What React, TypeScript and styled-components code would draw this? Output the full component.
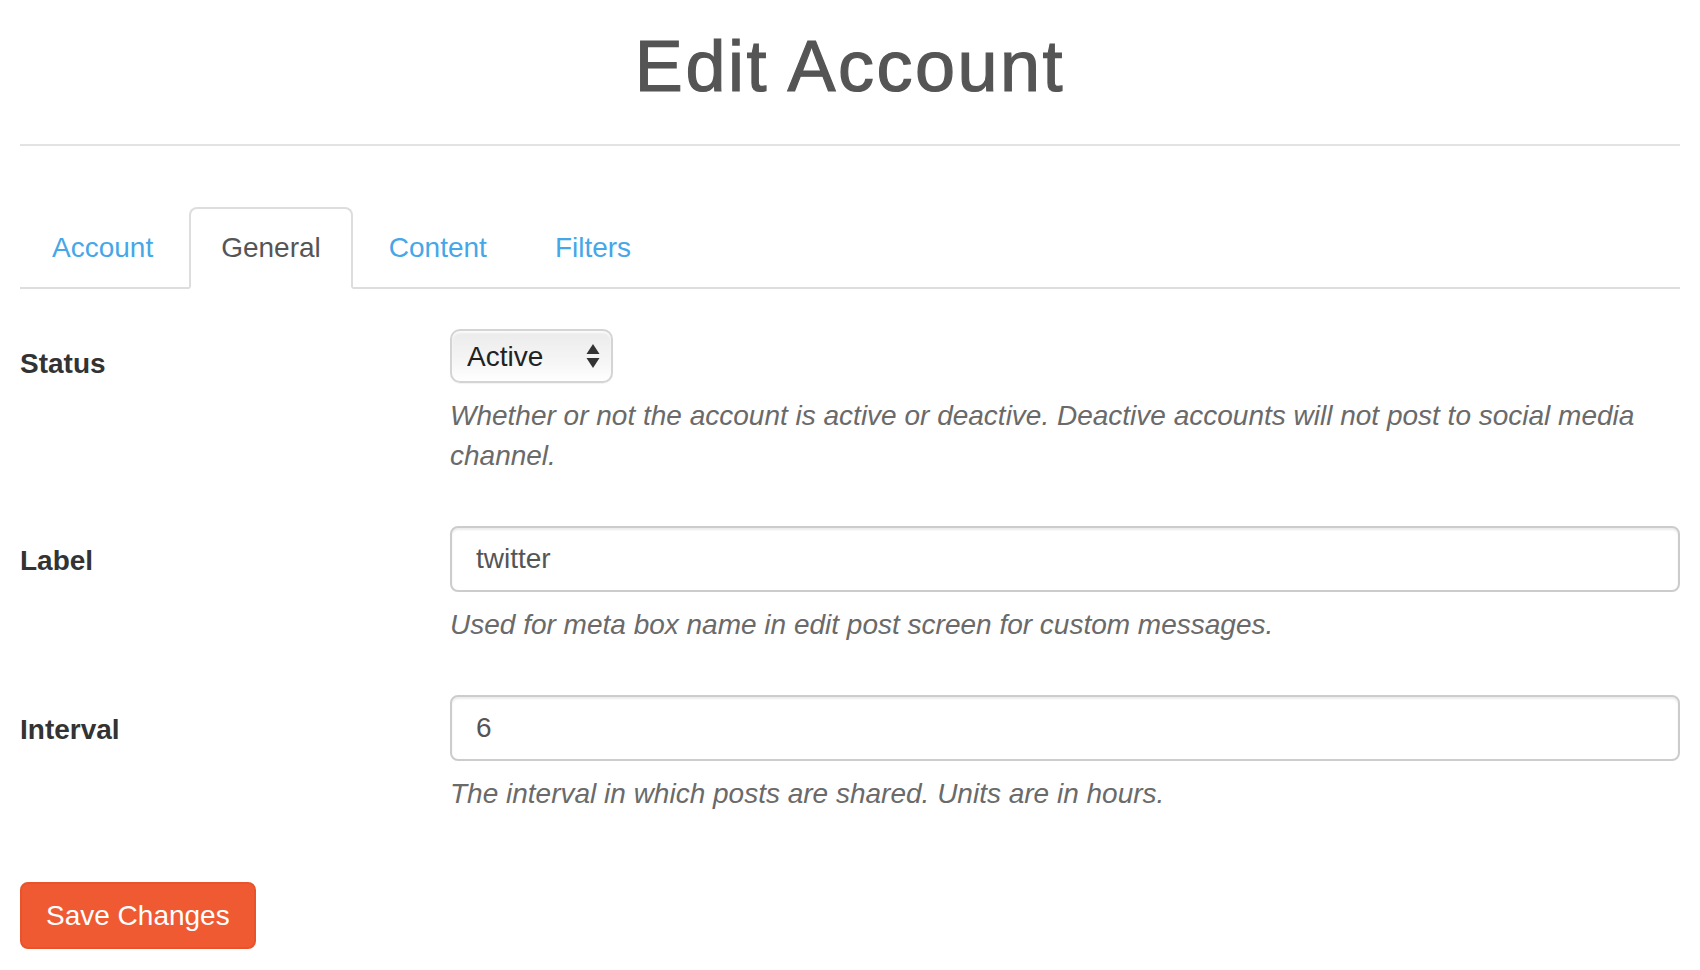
import React from "react";
import styled, { createGlobalStyle } from "styled-components";

const GlobalStyle = createGlobalStyle`
  html, body {
    margin: 0;
    padding: 0;
    background: #ffffff;
  }
  body {
    font-family: "Liberation Sans", Arial, Helvetica, sans-serif;
    font-size: 28px;
    line-height: 40px;
    color: #333333;
  }
  * { box-sizing: border-box; }
`;

const Page = styled.div`
  padding: 0 20px 20px;
`;

const Header = styled.header`
  margin-top: 27px;
  padding-bottom: 38px;
  border-bottom: 2px solid #e3e3e3;
`;

const Title = styled.h1`
  margin: 0;
  font-size: 72px;
  line-height: 79px;
  font-weight: 500;
  letter-spacing: 2.5px;
  -webkit-text-stroke: 1.2px #555555;
  color: #555555;
  text-align: center;
`;

const Tabs = styled.ul`
  list-style: none;
  margin: 61px 0 0;
  padding: 0;
  display: flex;
  border-bottom: 2px solid #dddddd;
`;

const TabItem = styled.li`
  margin: 0 4px -2px 0;
`;

const TabLink = styled.a<{ $active?: boolean }>`
  display: block;
  padding: 19px 30px;
  line-height: 40px;
  font-size: 28px;
  text-decoration: none;
  border: 2px solid ${(p) => (p.$active ? "#dddddd" : "transparent")};
  border-bottom-color: ${(p) => (p.$active ? "#ffffff" : "transparent")};
  border-radius: 8px 8px 0 0;
  background: ${(p) => (p.$active ? "#ffffff" : "transparent")};
  color: ${(p) => (p.$active ? "#555555" : "#45a7e8")};
  cursor: pointer;
`;

const Form = styled.form`
  margin-top: 40px;
  display: flex;
  flex-direction: column;
  gap: 50px;
`;

const Row = styled.div`
  display: grid;
  grid-template-columns: 430px 1fr;
`;

const Label = styled.label<{ $offset?: number }>`
  padding-top: ${(p) => p.$offset ?? 15}px;
  font-weight: 700;
  font-size: 28px;
  line-height: 40px;
  color: #333333;
`;

const Control = styled.div`
  display: flex;
  flex-direction: column;
  align-items: flex-start;
  gap: 13px;
`;

const SelectWrap = styled.div`
  position: relative;
  width: 163px;
  height: 54px;
`;

const Select = styled.select`
  appearance: none;
  -webkit-appearance: none;
  width: 100%;
  height: 100%;
  margin: 0;
  padding: 0 40px 0 15px;
  font-family: "Liberation Sans", Arial, Helvetica, sans-serif;
  font-size: 28px;
  color: #222222;
  border: 2px solid #d4d4d4;
  border-radius: 10px;
  background: linear-gradient(#ebebeb, #f7f7f7 70%, #ffffff);
  box-shadow: inset 0 2px 2px rgba(255, 255, 255, 0.8), 0 1px 1px rgba(0, 0, 0, 0.05);
  outline: none;
`;

const SelectArrows = styled.svg`
  position: absolute;
  right: 13px;
  top: 15px;
  pointer-events: none;
`;

const TextInput = styled.input`
  width: 100%;
  height: 66px;
  margin: 0;
  padding: 0 24px;
  font-family: "Liberation Sans", Arial, Helvetica, sans-serif;
  font-size: 28px;
  color: #555555;
  border: 2px solid #cccccc;
  border-radius: 8px;
  background: #ffffff;
  box-shadow: inset 0 2px 2px rgba(0, 0, 0, 0.075);
  outline: none;
`;

const Description = styled.p`
  margin: 0;
  font-style: italic;
  font-size: 28px;
  line-height: 40px;
  color: #6a6a6a;
`;

const Actions = styled.div`
  margin-top: 18px;
`;

const SaveButton = styled.button`
  height: 67px;
  padding: 0 24px;
  font-family: "Liberation Sans", Arial, Helvetica, sans-serif;
  font-size: 28px;
  line-height: 40px;
  color: #ffffff;
  background: #f05a33;
  border: 2px solid #e9532c;
  border-radius: 8px;
  cursor: pointer;
`;

export default function App() {
  return (
    <Page>
      <GlobalStyle />
      <Header>
        <Title>Edit Account</Title>
      </Header>
      <Tabs>
        <TabItem><TabLink>Account</TabLink></TabItem>
        <TabItem><TabLink $active>General</TabLink></TabItem>
        <TabItem><TabLink>Content</TabLink></TabItem>
        <TabItem><TabLink>Filters</TabLink></TabItem>
      </Tabs>
      <Form onSubmit={(e) => e.preventDefault()}>
        <Row>
          <Label>Status</Label>
          <Control>
            <SelectWrap>
              <Select defaultValue="active">
                <option value="active">Active</option>
                <option value="inactive">Deactive</option>
              </Select>
              <SelectArrows width="14" height="24" viewBox="0 0 14 24">
                <path d="M7 0 L13.5 10 H0.5 Z" fill="#333" />
                <path d="M7 24 L13.5 14 H0.5 Z" fill="#333" />
              </SelectArrows>
            </SelectWrap>
            <Description>
              Whether or not the account is active or deactive. Deactive accounts will not post to social media channel.
            </Description>
          </Control>
        </Row>
        <Row>
          <Label>Label</Label>
          <Control>
            <TextInput defaultValue="twitter" />
            <Description>Used for meta box name in edit post screen for custom messages.</Description>
          </Control>
        </Row>
        <Row>
          <Label>Interval</Label>
          <Control>
            <TextInput defaultValue="6" />
            <Description>The interval in which posts are shared. Units are in hours.</Description>
          </Control>
        </Row>
        <Actions>
          <SaveButton type="submit">Save Changes</SaveButton>
        </Actions>
      </Form>
    </Page>
  );
}
